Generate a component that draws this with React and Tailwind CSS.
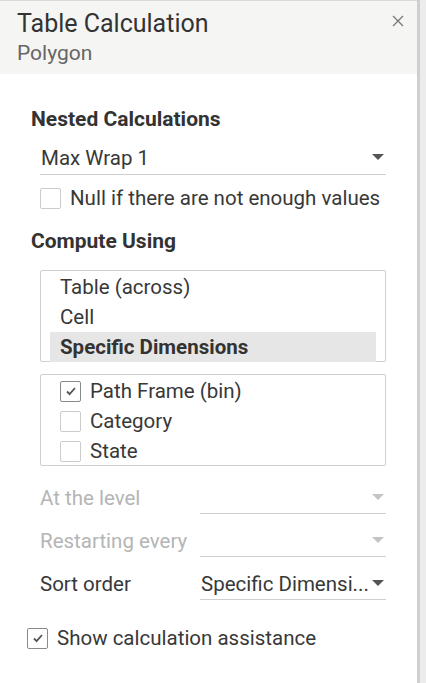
const font = { fontFamily: "Roboto, 'Liberation Sans', sans-serif" };

function Caret({ muted }) {
  return (
    <svg width="12" height="7" viewBox="0 0 12 7" className="shrink-0">
      <path d="M0 0h12L6 6z" fill={muted ? "#c4c4c4" : "#555"} />
    </svg>
  );
}

function Box({ checked, className = "" }) {
  return (
    <span className={`flex h-[21px] w-[21px] shrink-0 items-center justify-center rounded-[2px] border bg-white ${checked ? "border-[#8a8a8a]" : "border-[#cccccc]"} ${className}`}>
      {checked && (
        <svg width="12" height="10" viewBox="0 0 12 10">
          <path d="M2 5.5l2.6 2.6L10 2" fill="none" stroke="#555" strokeWidth="1.8" />
        </svg>
      )}
    </span>
  );
}

function LevelRow({ label, value, muted }) {
  return (
    <div className="flex h-[43px] items-end">
      <div className={`flex h-[32px] w-[160px] items-center text-[20.5px] leading-[28px] ${muted ? "text-[#b5b5b5]" : "text-[#383838]"}`}>{label}</div>
      <div className="flex h-[32px] flex-1 items-center justify-between border-b border-[#cfcfcf] pl-[1px] pr-[2px]">
        <span className="text-[20.5px] leading-[28px] text-[#383838]">{value}</span>
        <Caret muted={muted} />
      </div>
    </div>
  );
}

export default function App() {
  const dims = [
    { name: "Path Frame (bin)", on: true },
    { name: "Category", on: false },
    { name: "State", on: false },
  ];

  return (
    <div style={font} className="flex h-[683px] w-[426px] bg-white">
      <div className="flex h-full w-[417px] flex-col border-t border-[#dadada] bg-white">
        {/* header */}
        <div className="relative h-[73px] bg-[#f5f5f4] pl-[17px] pt-[7px]">
          <div className="text-[25px] leading-[32px] text-[#333]">Table Calculation</div>
          <div className="text-[21px] leading-[26px] text-[#666]">Polygon</div>
          <svg className="absolute right-[13px] top-[14px]" width="12" height="12" viewBox="0 0 12 12">
            <path d="M1 1l10 10M11 1L1 11" stroke="#777" strokeWidth="1.3" />
          </svg>
        </div>

        <div className="flex flex-col pl-[31px] pr-[31px]">
          <div className="mt-[32px] text-[21px] font-bold leading-[26px] text-[#333]">Nested Calculations</div>

          <div className="ml-[9px] mt-[9px] flex h-[34px] items-center justify-between border-b border-[#cfcfcf] pl-[1px] pr-[2px]">
            <span className="text-[20.5px] leading-[28px] text-[#383838]">Max Wrap 1</span>
            <Caret />
          </div>

          <div className="ml-[9px] mt-[9px] flex items-center gap-[9px]">
            <Box />
            <span className="text-[20.5px] leading-[28px] text-[#383838]">Null if there are not enough values</span>
          </div>

          <div className="mt-[16px] text-[21px] font-bold leading-[26px] text-[#333]">Compute Using</div>

          <div className="ml-[9px] mt-[16px] h-[92px] rounded-[2px] border border-[#cfcfcf] px-[9px] pt-[1px]">
            <div className="flex h-[30px] items-center pl-[10px] text-[20.5px] leading-[28px] text-[#383838]">Table (across)</div>
            <div className="flex h-[30px] items-center pl-[10px] text-[20.5px] leading-[28px] text-[#383838]">Cell</div>
            <div className="flex h-[30px] items-center bg-[#e6e6e6] pl-[10px] text-[20.5px] font-bold leading-[28px] text-[#333]">Specific Dimensions</div>
          </div>

          <div className="ml-[9px] mt-[12px] h-[92px] rounded-[2px] border border-[#cfcfcf] pl-[19px] pt-[1px]">
            {dims.map((d) => (
              <div key={d.name} className="flex h-[30px] items-center gap-[9px]">
                <Box checked={d.on} />
                <span className="text-[20.5px] leading-[28px] text-[#383838]">{d.name}</span>
              </div>
            ))}
          </div>

          <div className="ml-[9px] mt-[5px]">
            <LevelRow label="At the level" value="" muted />
            <LevelRow label="Restarting every" value="" muted />
            <LevelRow label="Sort order" value="Specific Dimensi..." />
          </div>

          <div className="ml-[-4px] mt-[24px] flex items-center gap-[9px]">
            <Box checked />
            <span className="text-[20.5px] leading-[28px] text-[#383838]">Show calculation assistance</span>
          </div>
        </div>
      </div>
      <div className="h-full w-[3px] bg-[#cfcfcf]" />
      <div className="h-full w-[6px] bg-[#ececec]" />
    </div>
  );
}
